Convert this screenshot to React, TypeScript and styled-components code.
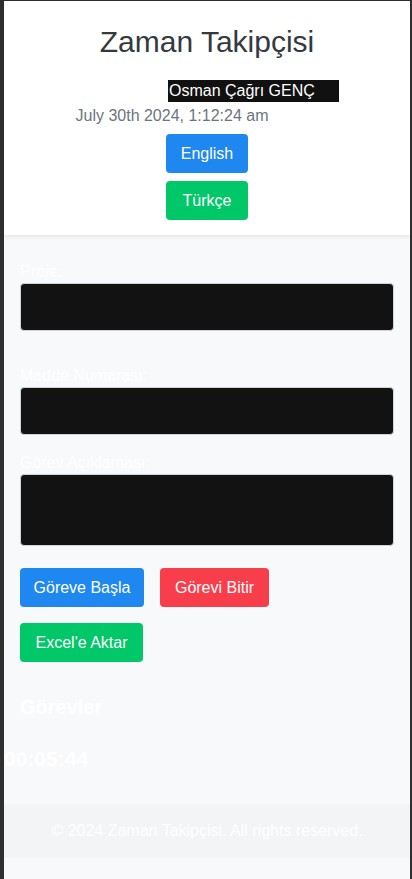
import React from "react";
import styled, { createGlobalStyle } from "styled-components";

const Global = createGlobalStyle`
  html, body { margin: 0; padding: 0; background: #2f2f2f; }
  body { font-family: "Liberation Sans", Arial, sans-serif; }
  * { box-sizing: border-box; }
`;

const Frame = styled.div`
  margin: 1px 2px 0 4px;
  min-height: 878px;
  background: #f8f9fa;
  display: flex;
  flex-direction: column;
`;

const Header = styled.header`
  background: #ffffff;
  box-shadow: 0 2px 4px rgba(0, 0, 0, 0.08);
  padding: 19px 0 15px;
  display: flex;
  flex-direction: column;
  align-items: center;
  position: relative;
  z-index: 1;
`;

const Title = styled.h1`
  margin: 0;
  font-size: 30px;
  line-height: 44px;
  font-weight: 400;
  color: #343a40;
`;

const NameTag = styled.div`
  margin-top: 16px;
  margin-left: 93px;
  width: 171px;
  height: 22px;
  background: #111111;
  color: #ffffff;
  font-size: 16px;
  line-height: 22px;
  padding-left: 1px;
  white-space: nowrap;
`;

const DateLine = styled.div`
  margin-top: 3px;
  margin-right: 70px;
  font-size: 16px;
  line-height: 22px;
  color: #6c757d;
`;

const Button = styled.button<{ $tone: "blue" | "green" | "red"; $w?: number }>`
  height: 39px;
  width: ${(p) => (p.$w ? `${p.$w}px` : "auto")};
  padding: 0;
  border: none;
  border-radius: 4px;
  color: #ffffff;
  font-family: inherit;
  font-size: 16px;
  white-space: nowrap;
  background: ${(p) =>
    p.$tone === "blue" ? "#1e87f0" : p.$tone === "green" ? "#00c767" : "#f93e4b"};
`;

const LangButton = styled(Button)<{ $gap: number }>`
  margin-top: ${(p) => p.$gap}px;
`;

const Main = styled.main`
  padding: 26px 16px 0;
  display: flex;
  flex-direction: column;
`;

const Label = styled.label<{ $gap: number }>`
  margin-top: ${(p) => p.$gap}px;
  font-size: 16px;
  line-height: 22px;
  color: #ffffff;
`;

const Field = styled.div<{ $h: number }>`
  height: ${(p) => p.$h}px;
  background: #121212;
  border: 1px solid #ced4da;
  border-radius: 4px;
`;

const ButtonRow = styled.div<{ $gap: number }>`
  display: flex;
  gap: 16px;
  margin-top: ${(p) => p.$gap}px;
`;

const SectionTitle = styled.h2`
  margin: 33px 0 0;
  font-size: 20px;
  line-height: 24px;
  font-weight: 700;
  color: #ffffff;
`;

const Timer = styled.div`
  margin-top: 28px;
  font-size: 21px;
  line-height: 24px;
  font-weight: 700;
  color: #ffffff;
`;

const Footer = styled.footer`
  margin-top: 33px;
  height: 54px;
  background: #f3f4f6;
  display: flex;
  align-items: center;
  justify-content: center;
  color: #ffffff;
  font-size: 16px;
`;

export default function App() {
  return (
    <>
      <Global />
      <Frame>
        <Header>
          <Title>Zaman Takipçisi</Title>
          <NameTag>Osman Çağrı GENÇ</NameTag>
          <DateLine>July 30th 2024, 1:12:24 am</DateLine>
          <LangButton $tone="blue" $gap={7} $w={82}>English</LangButton>
          <LangButton $tone="green" $gap={8} $w={82}>Türkçe</LangButton>
        </Header>
        <Main>
          <Label $gap={0}>Proje:</Label>
          <Field $h={48} />
          <Label $gap={34}>Madde Numarası:</Label>
          <Field $h={48} />
          <Label $gap={17}>Görev Açıklaması:</Label>
          <Field $h={72} />
          <ButtonRow $gap={22}>
            <Button $tone="blue" $w={124}>Göreve Başla</Button>
            <Button $tone="red" $w={109}>Görevi Bitir</Button>
          </ButtonRow>
          <ButtonRow $gap={16}>
            <Button $tone="green" $w={123}>Excel'e Aktar</Button>
          </ButtonRow>
          <SectionTitle>Görevler</SectionTitle>
        </Main>
        <Timer>00:05:44</Timer>
        <Footer>© 2024 Zaman Takipçisi. All rights reserved.</Footer>
      </Frame>
    </>
  );
}
